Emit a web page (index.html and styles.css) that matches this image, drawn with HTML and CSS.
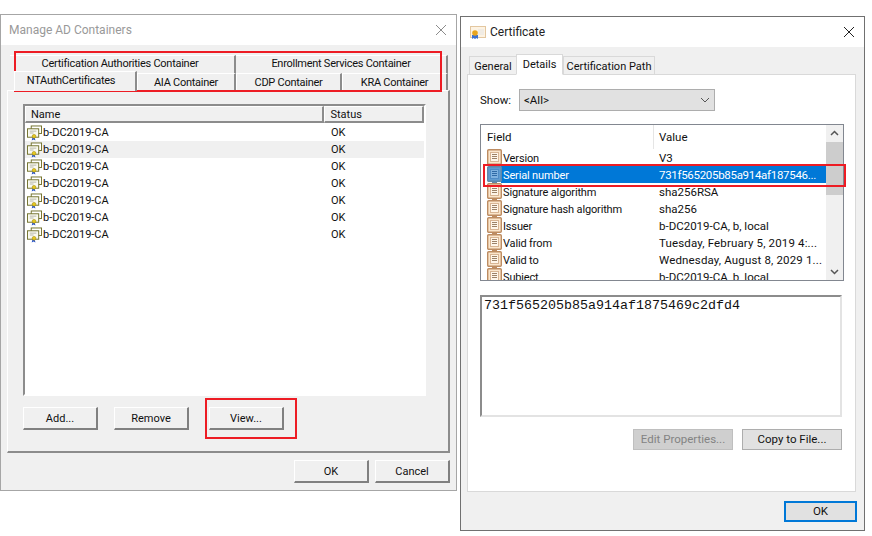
FILE: index.html
```html
<!DOCTYPE html>
<html lang="en">
<head>
    <meta charset="UTF-8">
    <title>Manage AD Containers and Certificate</title>
    <link rel="stylesheet" href="styles.css">
</head>
<body>
<svg class="defs" width="0" height="0">
  <symbol id="cert" viewBox="0 0 16 16">
    <rect x="4.500" y="0.500" width="11" height="8" fill="#fff" stroke="#6f6f28"/>
    <rect x="0.500" y="3.500" width="12" height="9" fill="#fafaf0" stroke="#6f6f28"/>
    <path d="M3 6h7M3 8h4" stroke="#b5b5a8"/>
    <path d="M6 12l-1 4 2-1 2 1-1-4z" fill="#2a55c8"/>
    <circle cx="7.500" cy="11.500" r="2" fill="#e6c81e" stroke="#a08a10" stroke-width=".6"/>
  </symbol>
  <symbol id="field" viewBox="0 0 15 17">
    <rect x="0.700" y="0.700" width="13.600" height="14.600" rx="1" fill="#fbe6cc" stroke="#bd8c62" stroke-width="1.400"/>
    <rect x="3.500" y="3.500" width="8" height="9" fill="#fff6ea" stroke="#d8b594"/>
    <path d="M5 5.500h5M5 7.500h5M5 9.500h5" stroke="#9c8268"/>
    <path d="M5 15.500h5V17H5z" fill="#bd8c62"/>
  </symbol>
  <symbol id="field-sel" viewBox="0 0 15 17">
    <rect x="0.700" y="0.700" width="13.600" height="14.600" rx="1" fill="#5f9bd0" stroke="#5f87a8" stroke-width="1.400"/>
    <rect x="3.500" y="3.500" width="8" height="9" fill="#7fb2e0" stroke="#4f8cc6"/>
    <path d="M5 5.500h5M5 7.500h5M5 9.500h5" stroke="#2f6aa6"/>
    <path d="M5 15.500h5V17H5z" fill="#5f87a8"/>
  </symbol>
</svg>

<div class="desktop">

  <div class="window win-ad">
    <div class="titlebar">
      <span class="title-faded">Manage AD Containers</span>
      <svg class="close" width="12" height="12" viewBox="0 0 12 12"><path d="M1 1l10 10M11 1L1 11" stroke="#8c8c8c" fill="none"/></svg>
    </div>
    <div class="ad-body">
      <div class="tabrow tabrow-back">
        <div class="adtab w-226">Certification Authorities Container</div>
        <div class="adtab w-212">Enrollment Services Container</div>
      </div>
      <div class="tabrow tabrow-front">
        <div class="adtab adtab-on w-123">NTAuthCertificates</div>
        <div class="adtab w-99">AIA Container</div>
        <div class="adtab w-106">CDP Container</div>
        <div class="adtab w-106">KRA Container</div>
      </div>
      <div class="adpanel">
        <div class="adlist">
          <div class="adhead">
            <div class="adhead-cell col-name">Name</div>
            <div class="adhead-cell col-status">Status</div>
          </div>
          <div class="adrow"><svg class="cert"><use href="#cert"/></svg><span class="col-rowname">b-DC2019-CA</span><span>OK</span></div>
          <div class="adrow adrow-hover"><svg class="cert"><use href="#cert"/></svg><span class="col-rowname">b-DC2019-CA</span><span>OK</span></div>
          <div class="adrow"><svg class="cert"><use href="#cert"/></svg><span class="col-rowname">b-DC2019-CA</span><span>OK</span></div>
          <div class="adrow"><svg class="cert"><use href="#cert"/></svg><span class="col-rowname">b-DC2019-CA</span><span>OK</span></div>
          <div class="adrow"><svg class="cert"><use href="#cert"/></svg><span class="col-rowname">b-DC2019-CA</span><span>OK</span></div>
          <div class="adrow"><svg class="cert"><use href="#cert"/></svg><span class="col-rowname">b-DC2019-CA</span><span>OK</span></div>
          <div class="adrow"><svg class="cert"><use href="#cert"/></svg><span class="col-rowname">b-DC2019-CA</span><span>OK</span></div>
        </div>
        <div class="adactions">
          <div class="btn3d">Add...</div>
          <div class="btn3d btn-remove">Remove</div>
          <div class="btn3d btn-view">View...</div>
        </div>
      </div>
      <div class="adfooter">
        <div class="btn3d">OK</div>
        <div class="btn3d">Cancel</div>
      </div>
    </div>
  </div>

  <div class="window win-cert">
    <div class="titlebar titlebar-cert">
      <svg class="title-icon" width="16" height="14" viewBox="0 0 16 14">
        <rect x="0.500" y="1.500" width="15" height="11" fill="#fdf3e3" stroke="#e3c7a0"/>
        <path d="M8 5h6M8 7h6M8 9h6" stroke="#e4e4e4"/>
        <path d="M2 10h6v4l-1.500-1-1.500 1-1.500-1-1.500 1z" fill="#3a6fd0"/>
        <circle cx="5" cy="8" r="2.800" fill="#e8a41c"/>
      </svg>
      <span>Certificate</span>
      <svg class="close" width="12" height="12" viewBox="0 0 12 12"><path d="M1 1l10 10M11 1L1 11" stroke="#222" fill="none"/></svg>
    </div>
    <div class="cert-body">
      <div class="certtabs">
        <div class="certtab w-47">General</div>
        <div class="certtab certtab-on">Details</div>
        <div class="certtab w-92">Certification Path</div>
      </div>
      <div class="certpanel">
        <div class="showrow">
          <span class="showlabel">Show:</span>
          <div class="select">
            <span>&lt;All&gt;</span>
            <svg width="10" height="6" viewBox="0 0 10 6"><path d="M1 1l4 4 4-4" stroke="#555" fill="none"/></svg>
          </div>
        </div>
        <div class="fieldlist">
          <div class="fieldmain">
            <div class="fieldhead">
              <div class="fh-field">Field</div>
              <div class="fh-value">Value</div>
            </div>
            <div class="fieldrow"><svg class="ficon"><use href="#field"/></svg><span class="fname">Version</span><span class="fval">V3</span></div>
            <div class="fieldrow fieldrow-on"><svg class="ficon"><use href="#field-sel"/></svg><span class="fname">Serial number</span><span class="fval fval-hex">731f565205b85a914af187546...</span></div>
            <div class="fieldrow"><svg class="ficon"><use href="#field"/></svg><span class="fname">Signature algorithm</span><span class="fval">sha256RSA</span></div>
            <div class="fieldrow"><svg class="ficon"><use href="#field"/></svg><span class="fname">Signature hash algorithm</span><span class="fval">sha256</span></div>
            <div class="fieldrow"><svg class="ficon"><use href="#field"/></svg><span class="fname">Issuer</span><span class="fval">b-DC2019-CA, b, local</span></div>
            <div class="fieldrow"><svg class="ficon"><use href="#field"/></svg><span class="fname">Valid from</span><span class="fval fval-long">Tuesday, February 5, 2019 4:...</span></div>
            <div class="fieldrow"><svg class="ficon"><use href="#field"/></svg><span class="fname">Valid to</span><span class="fval fval-long">Wednesday, August 8, 2029 1...</span></div>
            <div class="fieldrow"><svg class="ficon"><use href="#field"/></svg><span class="fname">Subject</span><span class="fval">b-DC2019-CA, b, local</span></div>
          </div>
          <div class="scrollbar">
            <svg class="sb-arrow" width="17" height="17" viewBox="0 0 17 17"><path d="M5 10l3.500-3.500L12 10" stroke="#555" stroke-width="1.500" fill="none"/></svg>
            <div class="sb-track"><div class="sb-thumb"></div></div>
            <svg class="sb-arrow" width="17" height="17" viewBox="0 0 17 17"><path d="M5 7l3.500 3.500L12 7" stroke="#555" stroke-width="1.500" fill="none"/></svg>
          </div>
        </div>
        <div class="valuebox">731f565205b85a914af1875469c2dfd4</div>
        <div class="certactions">
          <div class="flatbtn flatbtn-off">Edit Properties...</div>
          <div class="flatbtn">Copy to File...</div>
        </div>
      </div>
      <div class="certfooter">
        <div class="flatbtn okbtn">OK</div>
      </div>
    </div>
  </div>

  <div class="redbox red-tabs"></div>
  <div class="redbox red-view"></div>
  <div class="redbox red-serial"></div>
</div>
</body>
</html>
```

FILE: styles.css
```css
/* page */
body {
    margin: 0;
    background: #fff;
    font-family: Roboto, "Liberation Sans", sans-serif;
    font-size: 11.500px;
    color: #111;
}
.defs {
    position: absolute;
}
.desktop {
    position: relative;
    width: 872px;
    height: 536px;
    overflow: hidden;
}

/* both windows */
.window {
    position: absolute;
    box-sizing: border-box;
    display: flex;
    flex-direction: column;
    background: #f0f0f0;
}
.win-ad {
    left: 0;
    top: 14px;
    width: 457px;
    height: 477px;
    border: 1px solid #a6a6a6;
}
.win-cert {
    left: 460px;
    top: 16px;
    width: 405px;
    height: 515px;
    border: 1px solid #707070;
}
.titlebar {
    display: flex;
    align-items: center;
    height: 30px;
    padding: 0 8px;
    background: #fff;
    flex: none;
}
.title-faded {
    color: #999;
    font-size: 12px;
    margin-top: -1px;
}
.close {
    margin-left: auto;
    margin-right: 1px;
}
.titlebar-cert {
    height: 30px;
    color: #222;
    font-size: 12px;
}
.title-icon {
    margin-right: 4px;
    margin-left: 1px;
}

/* left window */
.ad-body {
    display: flex;
    flex-direction: column;
    flex: 1;
    padding: 10px 6px 0 6px;
    font-size: 11px;
}
.tabrow {
    display: flex;
    flex: none;
}
.tabrow-back {
    height: 18px;
    margin-left: 3px;
}
.tabrow-front {
    height: 17px;
    margin-left: 7px;
    position: relative;
}
.adtab {
    box-sizing: border-box;
    text-align: center;
    line-height: 15px;
    letter-spacing: -0.270px;
    border-right: 2px solid #8c8c8c;
    border-top: 1px solid #fff;
    background: #f0f0f0;
    white-space: nowrap;
}
.tabrow-front .adtab {
    border-left: 1px solid #fff;
    line-height: 17px;
}
.tabrow-front .adtab-on {
    height: 20px;
    margin-top: -2px;
    padding-right: 8px;
    line-height: 17px;
    position: relative;
    z-index: 1;
}
.w-226 { width: 226px; padding-right: 4px; }
.w-212 { width: 212px; }
.w-123 { width: 123px; }
.w-99 { width: 99px; }
.w-106 { width: 106px; }

.adpanel {
    box-sizing: border-box;
    width: 443px;
    height: 363px;
    padding: 13px 22px 0 15px;
    border: 1px solid;
    border-color: #fff #8c8c8c #8c8c8c #fff;
    border-width: 1px 2px 2px 1px;
    flex: none;
}
.adlist {
    box-sizing: border-box;
    height: 292px;
    border: 2px solid;
    border-color: #8c8c8c #fff #fff #8c8c8c;
    background: #fff;
}
.adhead {
    display: flex;
    height: 17px;
    margin-bottom: 1px;
}
.adhead-cell {
    box-sizing: border-box;
    padding-left: 5px;
    line-height: 15px;
    background: #f0f0f0;
    border: 1px solid;
    border-color: #fff #8c8c8c #8c8c8c #fff;
    border-width: 1px 2px 2px 1px;
}
.col-name { width: 301px; }
.col-status { width: 100px; }
.adrow {
    display: flex;
    align-items: center;
    height: 17px;
    padding-left: 2px;
}
.adrow-hover {
    background: #f0f0f0;
}
.cert {
    width: 15px;
    height: 16px;
    flex: none;
    margin-right: 1px;
}
.col-rowname {
    width: 288px;
}
.adactions {
    display: flex;
    margin-top: 11px;
}
.btn3d {
    box-sizing: border-box;
    width: 75px;
    height: 23px;
    line-height: 21px;
    text-align: center;
    background: #f0f0f0;
    border: 1px solid;
    border-color: #fff #808080 #808080 #fff;
    border-width: 1px 2px 2px 1px;
}
.btn-remove {
    margin-left: 16px;
}
.btn-view {
    margin-left: 20px;
}
.adfooter {
    display: flex;
    justify-content: flex-end;
    gap: 6px;
    margin-top: 7px;
    width: 443px;
}

/* right window */
.cert-body {
    display: flex;
    flex-direction: column;
    flex: 1;
    padding: 7px 9px 0 6px;
}
.certtabs {
    display: flex;
    height: 20px;
    margin-left: 2px;
    align-items: flex-end;
    position: relative;
    z-index: 1;
    flex: none;
}
.certtab {
    box-sizing: border-box;
    height: 18px;
    line-height: 19px;
    text-align: center;
    font-size: 11px;
    border: 1px solid #d9d9d9;
    border-bottom: none;
    white-space: nowrap;
}
.w-92 { width: 92px; }
.w-47 { width: 47px; border-right: none; }
.certtab-on {
    width: 47px;
    height: 21px;
    background: #fff;
    margin-bottom: -1px;
    border-bottom: 1px solid #fff;
}
.certpanel {
    box-sizing: border-box;
    width: 389px;
    height: 418px;
    border: 1px solid #d9d9d9;
    background: #fff;
    padding: 14px 12px 0 12px;
    flex: none;
}
.showrow {
    display: flex;
    align-items: center;
}
.showlabel {
    width: 39px;
}
.select {
    box-sizing: border-box;
    display: flex;
    align-items: center;
    justify-content: space-between;
    width: 196px;
    height: 22px;
    padding: 0 4px 0 4px;
    background: #e1e1e1;
    border: 1px solid #adadad;
}
.fieldlist {
    box-sizing: border-box;
    display: flex;
    width: 364px;
    height: 157px;
    margin-top: 13px;
    border: 1px solid #828790;
    overflow: hidden;
}
.fieldmain {
    flex: 1;
    overflow: hidden;
}
.fieldhead {
    display: flex;
    height: 24px;
    line-height: 25px;
}
.fh-field {
    box-sizing: border-box;
    width: 173px;
    padding-left: 6px;
    border-right: 1px solid #e5e5e5;
}
.fh-value {
    padding-left: 5px;
}
.fieldrow {
    display: flex;
    align-items: center;
    height: 17px;
    white-space: nowrap;
}
.ficon {
    width: 15px;
    height: 17px;
    flex: none;
    margin: 0 0 0 6px;
}
.fname {
    box-sizing: border-box;
    width: 152px;
    padding: 1px 0 0 1px;
    flex: none;
    font-size: 11px;
    letter-spacing: -0.150px;
}
.fval {
    padding-left: 5px;
}
.fval-hex {
    letter-spacing: -0.300px;
}
.fval-long {
    letter-spacing: 0.150px;
}
.fieldrow-on {
    background: linear-gradient(to right, #fff 20px, #0078d7 20px);
    color: #fff;
}
.scrollbar {
    display: flex;
    flex-direction: column;
    width: 17px;
    background: #f0f0f0;
    flex: none;
}
.sb-arrow {
    flex: none;
}
.sb-track {
    flex: 1;
}
.sb-thumb {
    height: 53px;
    background: #cdcdcd;
}
.valuebox {
    box-sizing: border-box;
    width: 362px;
    height: 122px;
    margin-top: 14px;
    padding: 1px 2px 0;
    border: 2px solid;
    border-color: #8c8c8c #e3e3e3 #e3e3e3 #8c8c8c;
    font-family: "Liberation Mono", monospace;
    font-size: 13.330px;
}
.certactions {
    display: flex;
    justify-content: flex-end;
    gap: 9px;
    width: 362px;
    margin-top: 12px;
}
.flatbtn {
    box-sizing: border-box;
    width: 100px;
    height: 21px;
    line-height: 19px;
    text-align: center;
    background: #e1e1e1;
    border: 1px solid #adadad;
}
.flatbtn-off {
    background: #cfcfcf;
    color: #838383;
    border-color: #bfbfbf;
}
.certfooter {
    display: flex;
    justify-content: flex-end;
    margin-top: 9px;
    margin-right: -2px;
}
.okbtn {
    width: 73px;
    border: 2px solid #0078d7;
    line-height: 17px;
}

/* annotations on top of the screenshot */
.redbox {
    position: absolute;
    box-sizing: border-box;
    border: 2px solid #ed1c24;
}
.red-tabs {
    left: 14px;
    top: 51px;
    width: 428px;
    height: 41px;
}
.red-view {
    left: 205px;
    top: 398px;
    width: 92px;
    height: 41px;
}
.red-serial {
    left: 483px;
    top: 164px;
    width: 363px;
    height: 23px;
}
```
